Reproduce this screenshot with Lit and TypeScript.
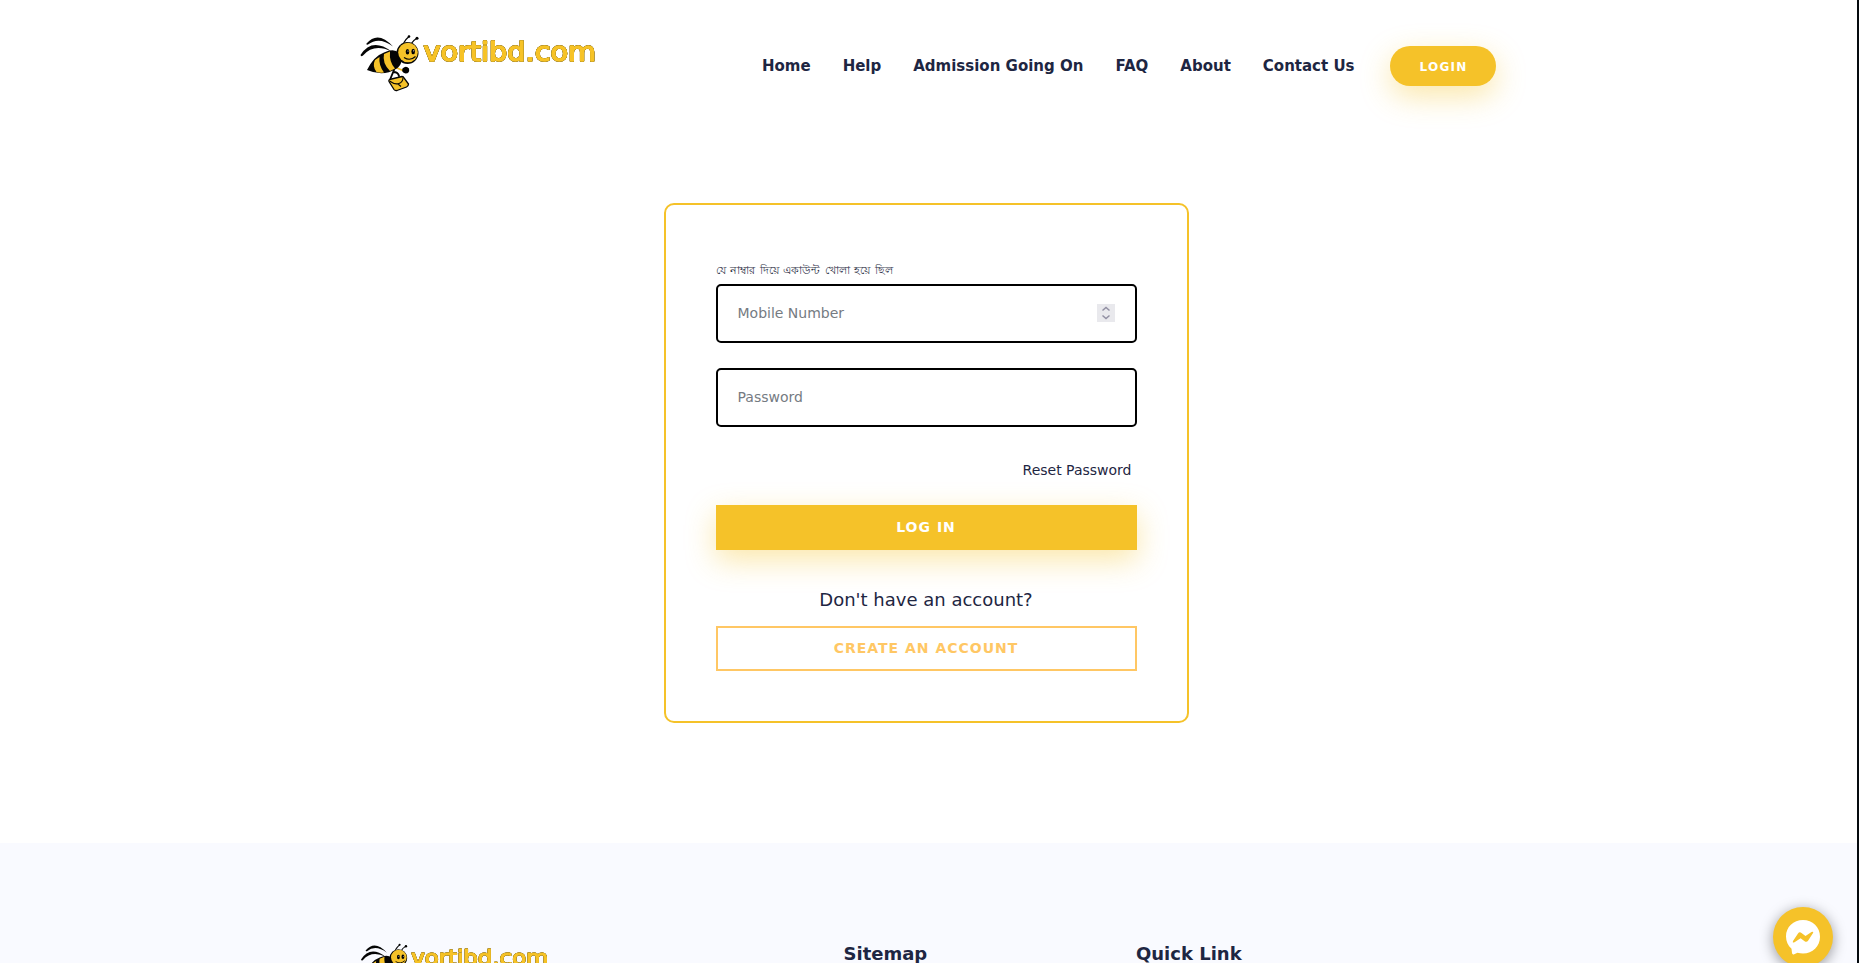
import { LitElement, html, css } from "lit";
import { customElement } from "lit/decorators.js";

@customElement("brand-logo")
class BrandLogo extends LitElement {
  static styles = css`
    :host { display: block; }
    svg { display: block; width: 100%; height: auto; }
    .word { font: 400 26.5px "DejaVu Sans", sans-serif; fill: #f7c327; stroke: #f7c327; stroke-width: 1.5px; stroke-linejoin: round; filter: drop-shadow(0 0 0.5px #6b5a20) drop-shadow(0 0 0.2px #6b5a20); }
  `;
  render() {
    return html`<svg viewBox="0 0 240 62" role="img" aria-label="vortibd.com">
      <g fill="#050505">
        <path d="M8.500 10.500Q20 -3 35 13.500Q21 3 10 11.500Q8 12 8.500 10.500Z" />
        <path d="M2.500 22Q14 4 33.500 18.500Q16 10 5 22.500Q3 24 2.500 22Z" />
      </g>
      <g fill="none" stroke="#050505" stroke-linecap="round">
        <path d="M46 9.500Q48 6 51 3.500M53 11Q55 7.500 58.500 5.500" stroke-width="1.300" />
        <path d="M36 37L32.500 45.500M35.500 39Q40 39 41 43" stroke-width="1.900" />
        <path d="M39 35L45 37.500" stroke="#f5c229" stroke-width="1.800" />
      </g>
      <circle cx="51" cy="3.500" r="1.300" /><circle cx="59" cy="5.300" r="1.500" />
      <path d="M9 37Q16 23 26 19.500Q36 15 41 20Q47 30 38 36Q25 44 9 37Z" fill="#050505" />
      <path d="M17 27L21.500 24Q20.500 32 26 39.500Q22 40 18.500 39Q14 33 17 27Z" fill="#f5c229" />
      <path d="M26 21L32 18.500Q31 29 37 35.500L32 38Q24 30 26 21Z" fill="#f5c229" />
      <circle cx="49.500" cy="20" r="11" fill="#050505" />
      <circle cx="50" cy="19.500" r="9.800" fill="#f5c229" />
      <ellipse cx="49.500" cy="18.800" rx="1.800" ry="2.800" /><ellipse cx="55.200" cy="18.500" rx="1.800" ry="2.800" />
      <circle cx="50" cy="18" r=".6" fill="#fff" /><circle cx="55.700" cy="17.800" r=".6" fill="#fff" />
      <path d="M46 24.500Q52 28.500 57.500 23.500" fill="none" stroke="#050505" stroke-width="1.100" />
      <path d="M44.500 35.500Q48 32 51 35.500Q52 40.500 47.500 40.500Q43 39.500 44.500 35.500Z" />
      <g transform="translate(0 -2)">
        <path d="M31.500 48.500L44 45.500Q45.500 45.500 46 47L50.500 53Q50.500 55 48.500 56L39 59.500Q37 60 36 58.500L31 50.500Q30.500 49 31.500 48.500Z" fill="#f5c229" stroke="#050505" stroke-width="1.300" />
        <path d="M31.500 50Q37 54 41 52.500Q45 51 45 46.500M40 53L43 55.500" fill="none" stroke="#050505" stroke-width="1.100" />
      </g>
      <text class="word" x="65.500" y="28.300" textLength="172.500" lengthAdjust="spacingAndGlyphs">vortibd.com</text>
    </svg>`;
  }
}

@customElement("app-root")
class AppRoot extends LitElement {
  static styles = css`
    :host { display: block; font-family: "DejaVu Sans", sans-serif; color: #1e2642; }
    * { box-sizing: border-box; }
    a { color: inherit; text-decoration: none; }
    .page { position: relative; height: 963px; overflow: hidden; background: #fff; border-right: 2px solid #050a0e; display: flex; flex-direction: column; }
    .header { display: flex; align-items: flex-start; padding: 33px 361px 0 358px; height: 203px; flex: none; }
    .brand { width: 240px; }
    .nav { display: flex; gap: 32px; margin-left: auto; margin-right: 35.500px; padding-top: 24px; font-size: 15px; font-weight: 700; line-height: 18px; white-space: nowrap; }
    .login { margin-top: 13px; width: 106px; height: 40px; border-radius: 20px; }
    .btn { display: flex; align-items: center; justify-content: center; font-weight: 700; letter-spacing: 1px; font-family: inherit; }
    .login.btn { font-size: 12px; letter-spacing: 1.200px; padding: 1px 0 0 1px; }
    .btn.solid { background: #f5c229; color: #fff; box-shadow: 0 10px 30px rgba(245, 194, 41, .4); }
    .card { flex: none; margin-left: 664px; width: 525px; height: 520px; border: 2px solid #f5c229; border-radius: 10px; padding: 55px 50px 0; display: flex; flex-direction: column; }
    .label { font-size: 11px; word-spacing: 1px; line-height: 22px; height: 24px; color: #2f3349; white-space: nowrap; }
    .field { height: 59px; flex: none; border: 2px solid #000; border-radius: 5px; padding: 0 20px 1px; display: flex; align-items: center; justify-content: space-between; font-size: 14px; color: #757b82; margin-bottom: 25px; }
    .field span { margin-left: -0.500px; }
    .spin { width: 18px; height: 18px; background: #e9e9ed; }
    .reset { font-size: 14px; line-height: 18px; margin: 9px 5.500px 26px; text-align: right; }
    .wide { height: 45px; flex: none; font-size: 14px; padding: 0 1px 2px 0; }
    .ask { font-size: 18px; line-height: 22px; text-align: center; margin: 39px 1px 15px 0; }
    .outline { border: 2px solid #ffc764; color: #ffc764; }
    .footer { margin-top: 120px; flex: 1; min-height: 0; background: #f9faff; display: grid; grid-template-columns: 485px 292.500px 1fr; padding: 99px 0 0 358.500px; overflow: hidden; }
    .footer .brand { width: 191px; }
    .heading { margin: 1px 0 0; font-size: 18px; line-height: 22px; font-weight: 700; }
    .chat { position: absolute; left: 1773px; top: 907px; width: 60px; height: 60px; border-radius: 50%; background: #f5c229; box-shadow: 0 3px 14px rgba(0, 0, 0, .4); display: grid; place-items: center; }
  `;
  links = ["Home", "Help", "Admission Going On", "FAQ", "About", "Contact Us"];
  render() {
    return html`<div class="page">
      <header class="header">
        <brand-logo class="brand"></brand-logo>
        <nav class="nav">${this.links.map((l) => html`<a>${l}</a>`)}</nav>
        <a class="login btn solid">LOGIN</a>
      </header>
      <main class="card">
        <div class="label">যে নাম্বার দিয়ে একাউন্ট খোলা হয়ে ছিল</div>
        <div class="field"><span>Mobile Number</span>
          <svg class="spin" viewBox="0 0 18 18" fill="none" stroke="#9290a3" stroke-width="1.500"><path d="M5.500 6.500L9 3.500L12.500 6.500M5.500 11.500L9 14.500L12.500 11.500" /></svg>
        </div>
        <div class="field"><span>Password</span></div>
        <a class="reset">Reset Password</a>
        <a class="wide btn solid">LOG IN</a>
        <div class="ask">Don't have an account?</div>
        <a class="wide btn outline">CREATE AN ACCOUNT</a>
      </main>
      <footer class="footer">
        <brand-logo class="brand"></brand-logo>
        <h4 class="heading">Sitemap</h4>
        <h4 class="heading">Quick Link</h4>
      </footer>
      <a class="chat" aria-label="Messenger"><svg width="34" height="35" viewBox="0 0 34 35"><path fill="#fff" d="M17 0C7.400 0 0 7 0 16.500C0 21.500 2 25.700 5.500 28.700L6 33Q6.300 35 8.200 34.200L11.500 32.700C13.300 33.200 15.100 33.400 17 33.400C26.600 33.400 34 26.300 34 16.700S26.600 0 17 0Z" /><path fill="#f5c229" d="M7 21L12 13.400Q13.500 11.500 15.500 12.900L19.500 15.900L25.500 12Q27.500 11 27.200 12.800L22.200 20.500Q20.700 22.700 18.600 21.200L14.600 18.200L8.500 22.300Q6 23.300 7 21Z" /></svg></a>
    </div>`;
  }
}
